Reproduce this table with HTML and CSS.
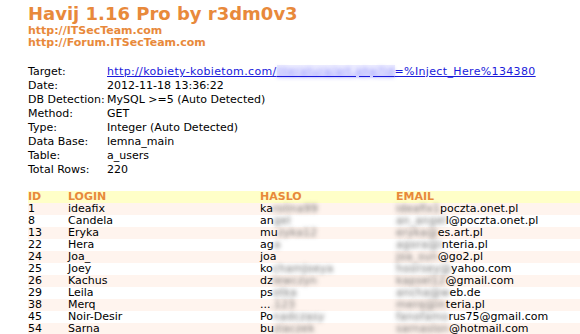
FILE: index.html
```html
<!DOCTYPE html>
<html>
<head>
<meta charset="utf-8">
<link rel="stylesheet" href="styles.css">
</head>
<body>
<div class="page">
  <h1 class="title">Havij 1.16 Pro by r3dm0v3</h1>
  <div class="site">http://ITSecTeam.com</div>
  <div class="site">http://Forum.ITSecTeam.com</div>

  <div class="info">
    <div class="k">Target:</div><div class="v"><a class="link" href="#">http://kobiety-kobietom.com/<span class="blur-link">literatura/art.php?id</span>=%Inject_Here%134380</a></div>
    <div class="k">Date:</div><div class="v">2012-11-18 13:36:22</div>
    <div class="k">DB Detection:</div><div class="v">MySQL &gt;=5 (Auto Detected)</div>
    <div class="k">Method:</div><div class="v">GET</div>
    <div class="k">Type:</div><div class="v">Integer (Auto Detected)</div>
    <div class="k">Data Base:</div><div class="v">lemna_main</div>
    <div class="k">Table:</div><div class="v">a_users</div>
    <div class="k">Total Rows:</div><div class="v">220</div>
  </div>

  <div class="grid">
    <div class="row head"><span>ID</span><span>LOGIN</span><span>HASLO</span><span>EMAIL</span></div>
    <div class="row odd"><span>1</span><span>ideafix</span><span>ka<i class="bl">rolina99</i></span><span><i class="bl">ideafix1</i>poczta.onet.pl</span></div>
    <div class="row"><span>8</span><span>Candela</span><span>an<i class="bl">gel</i></span><span><i class="bl">an_angel</i>l@poczta.onet.pl</span></div>
    <div class="row odd"><span>13</span><span>Eryka</span><span>mu<i class="bl">zyka12</i></span><span><i class="bl">eryka@</i>es.art.pl</span></div>
    <div class="row"><span>22</span><span>Hera</span><span>ag<i class="bl">a</i></span><span><i class="bl">agora@i</i>nteria.pl</span></div>
    <div class="row odd"><span>24</span><span>Joa_</span><span>joa<i class="bl"></i></span><span><i class="bl">joa_sun</i>@go2.pl</span></div>
    <div class="row"><span>25</span><span>Joey</span><span>ko<i class="bl">chamJoeya</i></span><span><i class="bl">hoorsey@</i>yahoo.com</span></div>
    <div class="row odd"><span>26</span><span>Kachus</span><span>dz<i class="bl">iewczyn</i></span><span><i class="bl">kapsel12</i>@gmail.com</span></div>
    <div class="row"><span>29</span><span>Leila</span><span>ps<i class="bl">otka</i></span><span><i class="bl">ancha@w</i>eb.de</span></div>
    <div class="row odd"><span>38</span><span>Merq</span><span>...<i class="bl">.123</i></span><span><i class="bl">merq@in</i>teria.pl</span></div>
    <div class="row"><span>45</span><span>Noir-Desir</span><span>Po<i class="bl">nadczasy</i></span><span><i class="bl">fanofamo</i>rus75@gmail.com</span></div>
    <div class="row odd"><span>54</span><span>Sarna</span><span>bu<i class="bl">ziaczek</i></span><span><i class="bl">sarnaslon</i>@hotmail.com</span></div>
  </div>
</div>
</body>
</html>
```
FILE: styles.css
```css
html, body {
  margin: 0;
  padding: 0;
  background: #fff;
}
body {
  font-family: "DejaVu Sans", Verdana, sans-serif;
  font-size: 11px;
  color: #000;
  overflow: hidden;
}
.page {
  padding: 3px 0 0 28px;
}
.title {
  margin: 0;
  font-size: 18px;
  font-weight: bold;
  line-height: 22px;
  color: #e8893b;
}
.site {
  font-weight: bold;
  font-size: 11px;
  line-height: 12px;
  color: #e8893b;
}
.info {
  display: grid;
  grid-template-columns: 79px auto;
  margin-top: 16px;
  line-height: 14px;
}
.link {
  color: #1a1adb;
  text-decoration: underline;
  letter-spacing: 0.35px;
}
.blur-link {
  color: transparent;
  text-shadow: 0 0 4px #8080ff;
  background: rgba(200, 200, 255, 0.35);
}
.grid {
  margin-top: 14px;
}
.row {
  display: grid;
  grid-template-columns: 40px 192px 136px 1fr;
  height: 12px;
  line-height: 12px;
  white-space: nowrap;
}
.row.head {
  background: #ffffc8;
  color: #e8893b;
  font-weight: bold;
}
.row.odd {
  background: #fff4ee;
}
.bl {
  font-style: normal;
  color: transparent;
  text-shadow: 0 0 4px rgba(80, 80, 80, 0.8);
}
```
